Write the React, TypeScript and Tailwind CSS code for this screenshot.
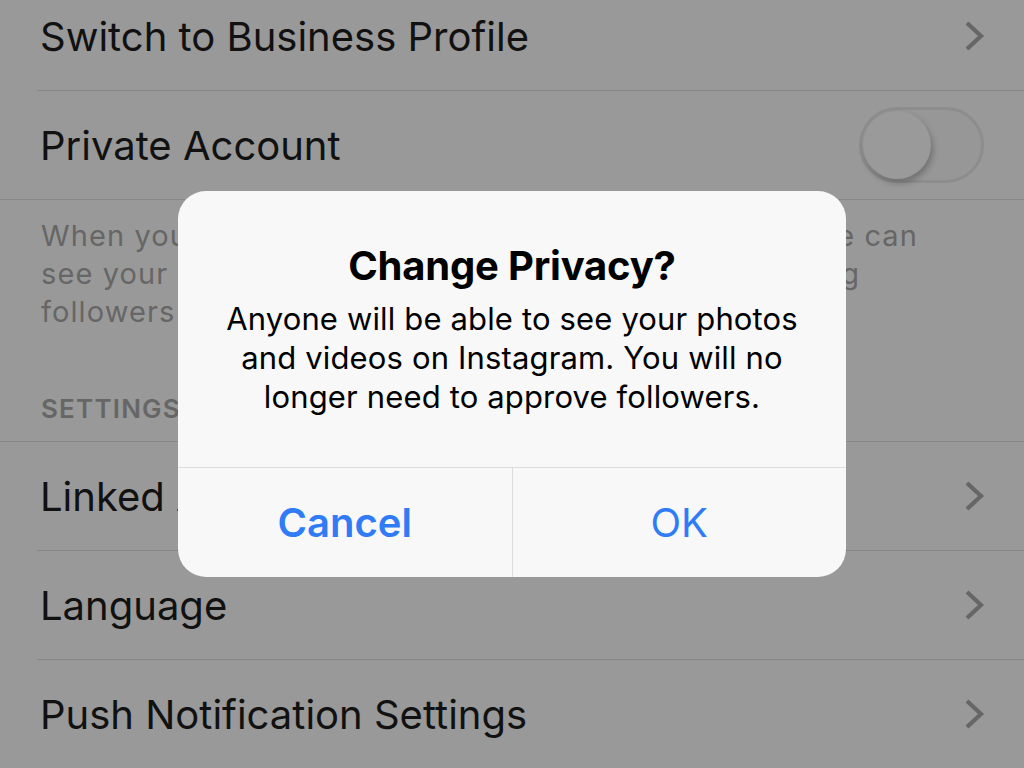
import React from "react";

function Chevron() {
   return (
      <svg width="22" height="32" viewBox="0 0 22 32" fill="none">
         <path d="M3 3 L17 16 L3 29" stroke="#666666" strokeWidth="4.2" strokeLinecap="butt" strokeLinejoin="miter" />
      </svg>
   );
}

function Row({ label, last }: { label: string; last?: boolean }) {
   return (
      <div className="pl-[37px]">
         <div className={"h-[109px] flex items-center justify-between pr-[38px] " + (last ? "" : "border-b border-[#878787]")}>
            <span className="text-[40px] leading-[48px] text-[#111] pl-[3px] tracking-[0px] pt-[2px]">{label}</span>
            <Chevron />
         </div>
      </div>
   );
}

export default function App() {
   return (
      <div
         className="relative w-[1024px] h-[768px] overflow-hidden bg-[#999999]"
         style={{ fontFamily: "Inter, 'Noto Sans', sans-serif" }}
      >
         <div className="-mt-[18px]">
            <Row label="Switch to Business Profile" />
            <div className="pl-[37px] border-b border-[#878787]">
               <div className="h-[108px] flex items-center justify-between pr-[40px]">
                  <span className="text-[40px] leading-[48px] text-[#111] pl-[3px] tracking-[0px] pt-[2px]">Private Account</span>
                  <div className="relative w-[125px] h-[76px] rounded-full border-[3px] border-[#8d8d8d] bg-[#979797]">
                     <div className="absolute left-[1px] top-[1px] w-[68px] h-[68px] rounded-full bg-[#9a9a9a] shadow-[2px_4px_6px_rgba(0,0,0,0.25)]" />
                  </div>
               </div>
            </div>
            <div className="pl-[41px] pr-[40px] pt-[17px] pb-[18px] border-b border-[#878787]">
               <p className="text-[29px] leading-[38px] tracking-[1.1px] text-[#666666] whitespace-nowrap">
                  When your account is private, only people you approve can<br />
                  see your photos and videos on Instagram. Your existing<br />
                  followers won't be affected.
               </p>
               <div className="mt-[64px] text-[26px] leading-[28px] font-semibold tracking-[1.2px] text-[#666666]">SETTINGS</div>
            </div>
            <Row label="Linked Accounts" />
            <Row label="Language" />
            <Row label="Push Notification Settings" />
         </div>

         <div className="absolute inset-0 flex items-center justify-center">
            <div className="w-[668px] h-[386px] rounded-[28px] bg-[#f8f8f8] flex flex-col overflow-hidden">
               <div className="flex-1 flex flex-col items-center pt-[51px] px-[20px]">
                  <div className="text-[40px] leading-[48px] font-bold text-black tracking-[-0.2px]">Change Privacy?</div>
                  <div className="mt-[9px] text-[31px] leading-[39px] tracking-[0.15px] text-black text-center whitespace-nowrap">
                     Anyone will be able to see your photos<br />and videos on Instagram. You will no<br />longer need to approve followers.
                  </div>
               </div>
               <div className="h-[110px] border-t border-[#dcdcdc] flex">
                  <div className="flex-1 flex items-center justify-center border-r border-[#dcdcdc] text-[40px] font-semibold text-[#2f7cf6]">Cancel</div>
                  <div className="flex-1 flex items-center justify-center text-[40px] text-[#2f7cf6]">OK</div>
               </div>
            </div>
         </div>
      </div>
   );
}
